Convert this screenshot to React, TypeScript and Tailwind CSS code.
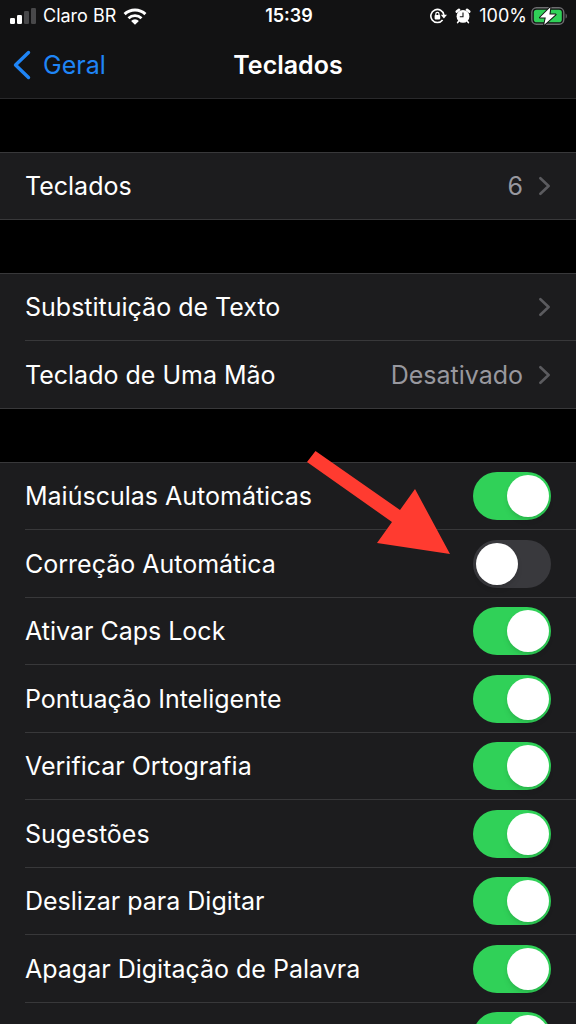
import { useState } from 'react';

interface LinkRow {
  label: string;
  value?: string;
}

interface SwitchRow {
  id: string;
  label?: string;
  on: boolean;
  pointed?: boolean;
}

const LINK_GROUPS: LinkRow[][] = [
  [{ label: 'Teclados', value: '6' }],
  [{ label: 'Substituição de Texto' }, { label: 'Teclado de Uma Mão', value: 'Desativado' }],
];

const SWITCHES: SwitchRow[] = [
  { id: 'caps', label: 'Maiúsculas Automáticas', on: true },
  { id: 'correction', label: 'Correção Automática', on: false, pointed: true },
  { id: 'capslock', label: 'Ativar Caps Lock', on: true },
  { id: 'punctuation', label: 'Pontuação Inteligente', on: true },
  { id: 'spelling', label: 'Verificar Ortografia', on: true },
  { id: 'suggestions', label: 'Sugestões', on: true },
  { id: 'slide', label: 'Deslizar para Digitar', on: true },
  { id: 'slide-delete', label: 'Apagar Digitação de Palavra', on: true },
  { id: 'shortcut', on: true },
];

const GROUP = 'mt-[53px] border-t border-[#38383a] bg-[#1c1c1e]';
const ROW = 'group relative h-[67px] even:h-[68px] pl-[25px] last:pl-0';
const ROW_INNER =
  'flex h-full items-center justify-between border-b border-[#38383a] pr-[25px] group-last:pl-[25px]';

function SignalIcon() {
  return (
    <svg className="h-4 w-[26px]" viewBox="0 0 26 16" fill="#fff" aria-hidden="true">
      <rect x="0" y="10" width="5" height="6" rx="1.2" />
      <rect x="7" y="7" width="5" height="9" rx="1.2" />
      <rect x="14" y="3" width="5" height="13" rx="1.2" fill="#48484a" />
      <rect x="21" y="0" width="5" height="16" rx="1.2" fill="#48484a" />
    </svg>
  );
}

function WifiIcon() {
  return (
    <svg className="h-[17px] w-6" viewBox="0 0 24 17" fill="none" aria-hidden="true">
      <path d="M1.6 6.1a15 15 0 0 1 20.8 0" stroke="#fff" strokeWidth="3" />
      <path d="M5.5 10.2a9.4 9.4 0 0 1 13 0" stroke="#fff" strokeWidth="2.8" />
      <path d="M12 16.8l-3.9-3.9a5.6 5.6 0 0 1 7.8 0z" fill="#fff" />
    </svg>
  );
}

function RotationLockIcon() {
  return (
    <svg className="h-4 w-[17px]" viewBox="0 0 17 16" fill="none" aria-hidden="true">
      <path d="M12.6 12A6.57 6.57 0 1 1 13.9 7" stroke="#fff" strokeWidth="1.6" />
      <path d="M10.8 6.8h6.2l-3.1 3.6z" fill="#fff" />
      <rect x="4.6" y="7" width="5.6" height="4.4" rx="0.8" fill="#fff" />
      <path d="M5.8 7.4V5.9a1.6 1.6 0 0 1 3.2 0v1.5" stroke="#fff" strokeWidth="1.2" />
    </svg>
  );
}

function AlarmIcon() {
  return (
    <svg className="h-4 w-4" viewBox="0 0 16 16" fill="none" aria-hidden="true">
      <path d="M1.8 3.6L4 1.8M14.2 3.6L12 1.8" stroke="#fff" strokeWidth="2.6" strokeLinecap="round" />
      <path d="M3.6 13.2L2.6 14.6M12.4 13.2l1 1.4" stroke="#fff" strokeWidth="1.6" strokeLinecap="round" />
      <circle cx="8" cy="8.4" r="6.4" fill="#fff" />
      <path d="M8 4.4v4.4H4.8" stroke="#121213" strokeWidth="1.1" />
    </svg>
  );
}

function BatteryIcon() {
  return (
    <svg className="h-5 w-[37px]" viewBox="0 0 37 20" fill="none" aria-hidden="true">
      <rect x="0.8" y="1.8" width="32" height="16.4" rx="4.6" stroke="#6d6d70" strokeWidth="1.4" />
      <rect x="2.8" y="3.8" width="28" height="12.4" rx="2.8" fill="#30d158" />
      <path d="M34.6 7.4c1.6.7 1.6 4.5 0 5.2z" fill="#6d6d70" />
      <path
        d="M19.4 1.2L9 11.6h5.8l-1.6 7.2L24.6 8.6h-6.2z"
        fill="#fff"
        stroke="#121213"
        strokeWidth="2"
        strokeLinejoin="round"
        paintOrder="stroke"
      />
    </svg>
  );
}

function Chevron() {
  return (
    <svg className="h-5 w-3" viewBox="0 0 12 20" fill="none" aria-hidden="true">
      <path d="M1.4 2.2L9.6 10l-8.2 7.8" stroke="#5b5b5f" strokeWidth="2.6" strokeLinecap="round" strokeLinejoin="round" />
    </svg>
  );
}

function Pointer() {
  return (
    <svg
      className="pointer-events-none absolute -top-[79px] right-[126px] z-10 h-[103px] w-[143px]"
      viewBox="0 0 143 103"
      aria-hidden="true"
    >
      <path d="M8.5 0L93 59l15-21 35 65-73-11 15-21L0 11z" fill="#ff3b30" />
    </svg>
  );
}

export default function App() {
  const [switches, setSwitches] = useState(SWITCHES);

  const toggle = (id: string) => {
    setSwitches((prev) => prev.map((s) => (s.id === id ? { ...s, on: !s.on } : s)));
  };

  return (
    <div className="flex h-screen flex-col overflow-hidden bg-black font-[Inter,'Liberation_Sans',sans-serif] text-[25px] leading-8 text-white">
      <header className="shrink-0 border-b border-[#29292b] bg-[#121213]">
        <div className="grid h-8 grid-cols-[1fr_auto_1fr] items-center pr-2 pl-[10px] text-[18px] leading-6">
          <div className="flex items-center gap-[7px]">
            <SignalIcon />
            <span>Claro BR</span>
            <WifiIcon />
          </div>
          <time className="font-semibold">15:39</time>
          <div className="flex items-center justify-end gap-2">
            <RotationLockIcon />
            <AlarmIcon />
            <div className="flex items-center gap-1">
              <span>100%</span>
              <BatteryIcon />
            </div>
          </div>
        </div>
        <nav className="grid h-[66px] grid-cols-[1fr_auto_1fr] items-center px-3">
          <a href="#geral" className="flex items-center gap-3 text-[#1f85f6]">
            <svg className="h-[30px] w-[19px]" viewBox="0 0 19 30" fill="none" aria-hidden="true">
              <path d="M16.5 2.5L3.5 15l13 12.5" stroke="currentColor" strokeWidth="3.4" strokeLinecap="round" strokeLinejoin="round" />
            </svg>
            Geral
          </a>
          <h1 className="font-semibold">Teclados</h1>
        </nav>
      </header>

      <main className="min-h-0 flex-1 overflow-y-auto [scrollbar-width:none]">
        {LINK_GROUPS.map((rows) => (
          <ul key={rows[0].label} className={GROUP}>
            {rows.map((row) => (
              <li key={row.label} className={ROW}>
                <a href="#abrir" className={ROW_INNER}>
                  <span>{row.label}</span>
                  <span className="flex items-center gap-4 text-[#98989f]">
                    {row.value}
                    <Chevron />
                  </span>
                </a>
              </li>
            ))}
          </ul>
        ))}

        <ul className={GROUP}>
          {switches.map((s) => (
            <li key={s.id} className={ROW}>
              <div className={ROW_INNER}>
                {s.label && <label htmlFor={s.id}>{s.label}</label>}
                <input
                  id={s.id}
                  type="checkbox"
                  role="switch"
                  aria-label={s.label ? undefined : 'Atalho “.”'}
                  checked={s.on}
                  onChange={() => toggle(s.id)}
                  className="ml-auto h-12 w-[78px] shrink-0 appearance-none rounded-full bg-[#39393d] p-[3px] before:block before:size-[42px] before:rounded-full before:bg-white before:shadow-md before:transition-transform checked:bg-[#30d158] checked:before:translate-x-[31px]"
                />
              </div>
              {s.pointed && <Pointer />}
            </li>
          ))}
        </ul>
      </main>
    </div>
  );
}
